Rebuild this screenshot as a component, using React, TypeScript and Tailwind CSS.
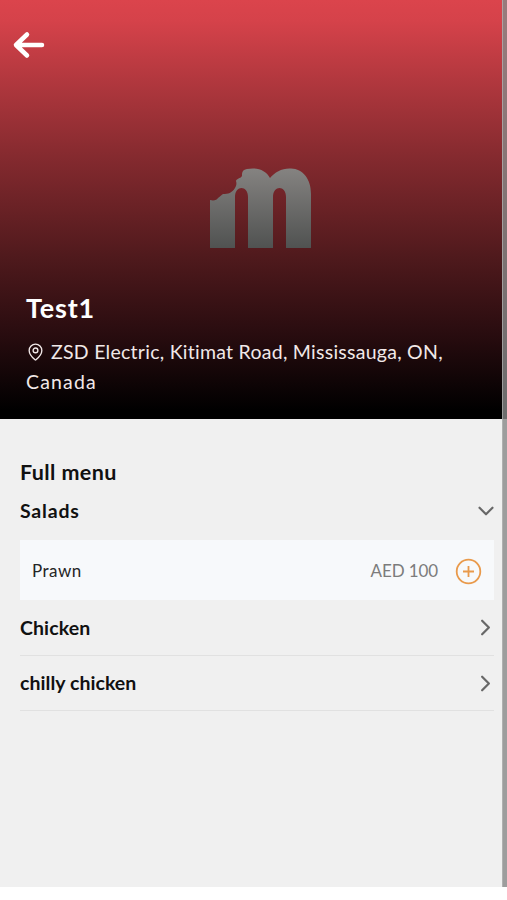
import { ChevronDown, ChevronRight, MapPin } from 'lucide-react';

const closedCategories = [
  { name: 'Chicken', spacing: 'tracking-[0.1px]', height: 'h-14' },
  { name: 'chilly chicken', spacing: 'tracking-[0.05px]', height: 'h-[55px]' }
];

function Logo() {
  return (
    <svg width="104" height="82" viewBox="0 0 104 82">
      <defs>
        <linearGradient id="logo" x1="0" y1="0" x2="0" y2="1">
          <stop offset="0" stopColor="#858381" />
          <stop offset="1" stopColor="#505251" />
        </linearGradient>
      </defs>
      <path
        fill="url(#logo)"
        d="M1 80V32C5 33 8 32 9 30C11 29 12 27 14 26C19 26 23 25 26 20C27 18 28 16 27 13C28 10 31 11 33 8C33 5 33 2 38 1C48 -1 57 2 61 10C66 4 73 0 82 .5C94 1 102 11 102 26V80H77V29C77 17 64 17 64 29V80H39V29C39 17 26 17 26 29V80Z"
      />
    </svg>
  );
}

export default function App() {
  return (
    <div className="relative h-[900px] w-[507px] overflow-hidden bg-white font-['Lato',sans-serif]">
      {/* Hero */}
      <header className="flex h-[419px] flex-col bg-[linear-gradient(to_bottom,#db444c_0%,#d5424a_5%,#882b30_36%,#4e191c_62%,#280c0f_80%,#000_98%)] text-white">
        <div className="h-[168px] pt-[30px] pl-[12px]">
          <svg width="34" height="30" viewBox="0 0 34 30" fill="none" stroke="currentColor" strokeWidth="4.5" strokeLinecap="round" strokeLinejoin="round">
            <path d="M30 15H4M15 4.500L4 15L15 25.500" />
          </svg>
        </div>
        <div className="flex h-[82px] justify-center pl-[15px]">
          <Logo />
        </div>
        <div className="pt-[42px] pl-[26px]">
          <h1 className="text-[27px] leading-8 font-bold tracking-[0.8px]">Test1</h1>
          <p className="mt-[13px] w-[450px] text-[19.5px] leading-[29.5px] tracking-[0.26px] text-[#f1e8e8]">
            <MapPin className="mr-[6px] -mt-1 inline h-5 w-[19px]" strokeWidth={1.7} />
            ZSD Electric, Kitimat Road, Mississauga, ON,{' '}
            <span className="tracking-[1.15px]">Canada</span>
          </p>
        </div>
      </header>

      {/* Menu */}
      <main className="h-[468px] bg-[#f0f0f0] pt-[38px] pr-[13px] pl-5 text-[#111]">
        <h2 className="text-[21.5px] leading-[30px] font-bold tracking-[0.4px]">Full menu</h2>
        <div className="flex h-[53px] items-start justify-between pt-[10px]">
          <h3 className="text-[19.5px] leading-[28px] font-bold tracking-[0.8px]">Salads</h3>
          <ChevronDown className="-mr-[5px] mt-px h-[26px] w-[26px] text-[#686868]" strokeWidth={2} />
        </div>
        <div className="flex h-[60px] items-center bg-[#f7f9fb] pt-0.5 pr-3 pl-3">
          <span className="flex-1 text-[17px] tracking-[0.5px] text-[#252525]">Prawn</span>
          <span className="mr-[17px] text-[17px] tracking-[-0.1px] text-[#7c7c7c]">AED 100</span>
          <svg width="27" height="27" viewBox="0 0 27 27" fill="none" stroke="#e99a4b" strokeWidth="1.8">
            <circle cx="13.5" cy="13.5" r="11.8" />
            <path d="M8 13.500H19M13.500 8V19" />
          </svg>
        </div>
        {closedCategories.map((category) => (
          <div
            key={category.name}
            className={`flex items-center justify-between border-b border-[#e1e1e1] ${category.height}`}
          >
            <h3 className={`text-[19.5px] leading-7 font-bold ${category.spacing}`}>{category.name}</h3>
            <ChevronRight className="-mr-[5px] h-[27px] w-[27px] text-[#686868]" strokeWidth={2} />
          </div>
        ))}
      </main>

      {/* Scrollbar */}
      <div className="absolute top-0 right-0 h-[887px] w-[5px] border-l border-[#bdbdbd]/60 bg-[#888]/80" />
    </div>
  );
}
